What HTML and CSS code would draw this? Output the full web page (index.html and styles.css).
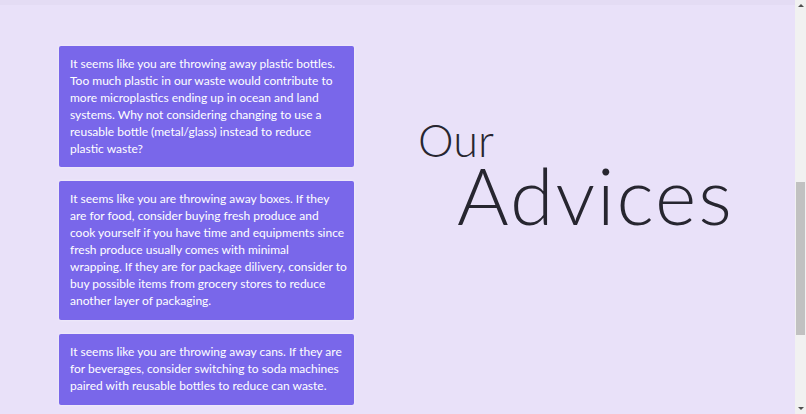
FILE: index.html
```html
<!DOCTYPE html>
<html lang="en">
<head>
<meta charset="utf-8">
<title>Our Advices</title>
<link rel="stylesheet" href="styles.css">
</head>
<body>
<div class="window">
  <main class="page">
    <section class="advices">
      <div class="cards">
        <div class="card">It seems like you are throwing away plastic bottles.<br>Too much plastic in our waste would contribute to<br>more microplastics ending up in ocean and land<br>systems. Why not considering changing to use a<br>reusable bottle (metal/glass) instead to reduce<br>plastic waste?</div>
        <div class="card">It seems like you are throwing away boxes. If they<br>are for food, consider buying fresh produce and<br>cook yourself if you have time and equipments since<br>fresh produce usually comes with minimal<br>wrapping. If they are for package dilivery, consider to<br>buy possible items from grocery stores to reduce<br>another layer of packaging.</div>
        <div class="card">It seems like you are throwing away cans. If they are<br>for beverages, consider switching to soda machines<br>paired with reusable bottles to reduce can waste.</div>
      </div>
      <div class="heading">
        <h1 class="title"><span class="title-small">Our</span><span class="title-big">Advices</span></h1>
      </div>
    </section>
  </main>
  <div class="scrollbar">
    <div class="arrow arrow-up"></div>
    <div class="track"><div class="thumb"></div></div>
    <div class="arrow arrow-down"></div>
  </div>
</div>
</body>
</html>
```
FILE: styles.css
```css
html, body {
  margin: 0;
  padding: 0;
  height: 100%;
  overflow: hidden;
}
body {
  font-family: "Lato", "Liberation Sans", sans-serif;
  background: #e9e1f9;
}
.window {
  display: flex;
  height: 414px;
}
.page {
  flex: 1;
  background: #e9e1f9;
  border-top: 5px solid #e4dcf4;
  box-sizing: border-box;
}
.advices {
  display: flex;
  padding: 41px 0 0 59px;
}
.cards {
  width: 295px;
  flex-shrink: 0;
  display: flex;
  flex-direction: column;
  gap: 14px;
}
.card {
  background: #7967ea;
  color: #ffffff;
  border-radius: 2px;
  padding: 10px 4px 10px 11px;
  font-size: 12px;
  line-height: 16.9px;
  white-space: nowrap;
  box-shadow: 0 0 3px rgba(255, 255, 255, 0.6);
}
.heading {
  flex: 1;
  display: flex;
  padding-left: 64px;
  padding-top: 75px;
}
.title {
  margin: 0;
  font-weight: 300;
  color: #272630;
  display: flex;
  flex-direction: column;
  align-items: flex-start;
}
.title-small {
  font-size: 45px;
  line-height: 0.85;
}
.title-big {
  font-size: 79px;
  line-height: 0.85;
  letter-spacing: 2px;
  padding-left: 39px;
  margin-top: 2px;
}
.scrollbar {
  width: 11px;
  background: #f1f1f1;
  display: flex;
  flex-direction: column;
  align-items: center;
}
.arrow {
  height: 11px;
  width: 11px;
  display: flex;
  align-items: center;
  justify-content: center;
}
.arrow-up::before {
  content: "";
  border-left: 3px solid transparent;
  border-right: 3px solid transparent;
  border-bottom: 3px solid #505050;
}
.arrow-down::before {
  content: "";
  border-left: 3px solid transparent;
  border-right: 3px solid transparent;
  border-top: 3px solid #505050;
}
.track {
  flex: 1;
  width: 100%;
  display: flex;
  flex-direction: column;
}
.thumb {
  margin-top: 171px;
  height: 153px;
  width: 9px;
  margin-left: 1px;
  background: #c1c1c1;
}
```
